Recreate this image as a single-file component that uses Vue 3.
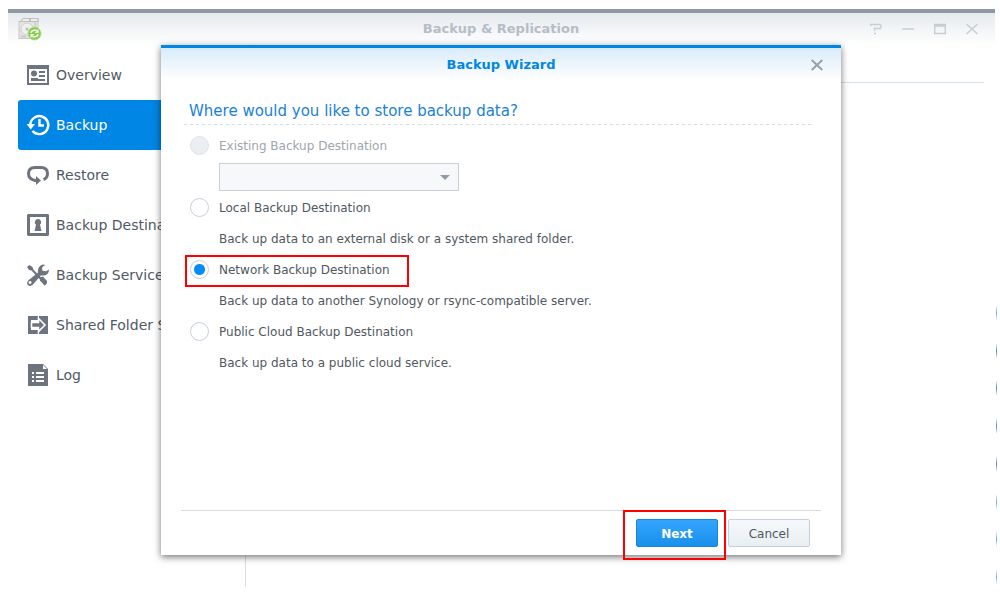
<script setup>
import { ref } from 'vue'

const menu = [
  { id: 'overview', label: 'Overview' },
  { id: 'backup', label: 'Backup' },
  { id: 'restore', label: 'Restore' },
  { id: 'destination', label: 'Backup Destination' },
  { id: 'services', label: 'Backup Services' },
  { id: 'sync', label: 'Shared Folder Sync' },
  { id: 'log', label: 'Log' }
]
const active = ref('backup')

const options = [
  { id: 'existing', label: 'Existing Backup Destination', disabled: true },
  { id: 'local', label: 'Local Backup Destination', note: 'Back up data to an external disk or a system shared folder.' },
  { id: 'network', label: 'Network Backup Destination', note: 'Back up data to another Synology or rsync-compatible server.' },
  { id: 'cloud', label: 'Public Cloud Backup Destination', note: 'Back up data to a public cloud service.' }
]
const choice = ref('network')
const marks = ['teal', 'blue', 'blue', 'blue', 'blue', 'teal', 'teal', 'teal']
</script>

<template>
  <div class="desktop">
    <main class="window">
      <header class="titlebar">
        <svg class="app-icon" viewBox="0 0 24 24" aria-hidden="true">
          <path d="M1 5L5 1H21V20H3z" fill="#d2d2d2" />
          <path d="M5 1.500h6.500v3H3zM12.500 1.500H20v3h-7.500z" fill="#eee" stroke="#aaa" stroke-width=".6" />
          <path d="M17 5h4v15h-4z" fill="#dedede" />
          <rect x="1" y="4.500" width="16" height="17" fill="#e4e4e4" stroke="#bdbdbd" stroke-width=".8" />
          <circle cx="9" cy="12" r="6" fill="#efefef" stroke="#c6c6c6" stroke-width=".7" />
          <circle cx="9" cy="12" r="1.500" fill="#bbb" />
          <path d="M3 18.500h5v2H3z" fill="#cacaca" />
          <circle cx="16.500" cy="16.500" r="6.500" fill="#84cf48" stroke="#aade83" stroke-width=".8" />
          <path d="M12.800 15.800q.7-2.500 3.700-2.500h2M20.200 17.200q-.7 2.500-3.700 2.500h-2" fill="none" stroke="#fff" stroke-width="1.500" />
          <path d="M20.500 12v4h-4zM12.500 21v-4h4z" fill="#fff" />
        </svg>
        <h1>Backup &amp; Replication</h1>
        <div class="controls">
          <button type="button" aria-label="Help">
            <svg viewBox="0 0 12 12"><path d="M.5 3V1.500h9.500l1 1v2L10 5.500H4.500V8M4 10.500h2" /></svg>
          </button>
          <button type="button" aria-label="Minimize">
            <svg viewBox="0 0 12 12"><path d="M0 6h12" /></svg>
          </button>
          <button type="button" aria-label="Maximize">
            <svg viewBox="0 0 12 12"><path d="M.7 1.500h10.600v9H.7zM1 3h10" /></svg>
          </button>
          <button type="button" aria-label="Close">
            <svg viewBox="0 0 12 12"><path d="M.5 1l11 10M11.500 1L.5 11" /></svg>
          </button>
        </div>
      </header>

      <div class="body">
        <nav class="sidebar">
          <button
            v-for="item in menu"
            :key="item.id"
            type="button"
            class="item"
            :class="{ active: active === item.id }"
            @click="active = item.id"
          >
            <svg v-if="item.id === 'overview'" viewBox="0 0 22 22">
              <path fill-rule="evenodd" d="M0 1h22v20H0zM2 5v14h18V5z" />
              <circle cx="7" cy="9.500" r="3" />
              <path d="M4 14h7v2H4zM12 7h6v2h-6zM12 11h6v2h-6zM4 15h14v2H4z" />
            </svg>
            <svg v-else-if="item.id === 'backup'" viewBox="0 0 22 22">
              <path d="M3.300 11A9 9 0 1 1 5.500 17M12.500 5v6.500h4.500" fill="none" stroke="currentColor" stroke-width="2.400" />
              <path d="M-.5 10h8.500l-4.200 5.500z" />
            </svg>
            <svg v-else-if="item.id === 'restore'" viewBox="0 0 22 22">
              <path d="M10 16.500H8Q1.500 15 1.500 9.500 1.500 3.500 8 3.500h6q6.500 0 6.500 6 0 4.500-4 6" fill="none" stroke="currentColor" stroke-width="3" />
              <path d="M9 12l5 4.500-5 4.500z" />
            </svg>
            <svg v-else-if="item.id === 'destination'" viewBox="0 0 22 22">
              <path fill-rule="evenodd" d="M1 0h20l1 1v20l-1 1H1l-1-1V1zM3 3v16h16V3z" />
              <path d="M11 5a3.200 3.200 0 0 1 2 5.700L14.500 17h-7L9 10.700A3.200 3.200 0 0 1 11 5z" />
            </svg>
            <svg v-else-if="item.id === 'services'" viewBox="0 0 22 22">
              <path d="M0 3l2.500-2 3 2 .8 2.500L17 16.500l-1.500 1.700L4.500 6.500 2 6z" />
              <path d="M13 13.500l3-1 4 4.500q.5 3-2.500 4.500l-4.500-5z" />
              <path fill-rule="evenodd" d="M22 5.500q0 5.500-5.500 6-1.500.2-2.500-.3L6 20.500q-2.500 2.500-5 .7-2-2.500.5-5L11 8.500q-.7-6.500 5-8l2 .2-3 3 .5 3 3.500.5zM3 17a1.500 1.500 0 1 0 .1 0z" />
            </svg>
            <svg v-else-if="item.id === 'sync'" viewBox="0 0 22 22">
              <path d="M1 2h10v4H4v10h7v4H1zM12 2h9v18h-9z" />
              <path d="M4.500 8.500h7V4.500l6.500 6.500-6.500 6.500v-4h-7z" fill="#6c757f" stroke="#fff" stroke-width="1.600" />
            </svg>
            <svg v-else viewBox="0 0 22 22">
              <path d="M1 0h15l5 5v17H1z" />
              <path d="M16 1v4h4zM5 8h2v2H5zM9 8h8v2H9zM5 12h2v2H5zM9 12h8v2H9zM5 16h2v2H5zM9 16h8v2H9z" fill="#fff" />
            </svg>
            <span>{{ item.label }}</span>
          </button>
        </nav>
        <section class="content"><hr /></section>
      </div>
    </main>

    <div class="edge" aria-hidden="true">
      <i v-for="(m, i) in marks" :key="i" :class="m"></i>
    </div>

    <div class="overlay">
      <form class="dialog" role="dialog" aria-labelledby="wizard-title" @submit.prevent>
        <header class="dialog-head">
          <h2 id="wizard-title">Backup Wizard</h2>
          <button type="button" class="close" aria-label="Close">
            <svg viewBox="0 0 12 12"><path d="M.7 1l10.600 10M11.300 1L.7 11" /></svg>
          </button>
        </header>
        <div class="dialog-body">
          <h3>Where would you like to store backup data?</h3>
          <div v-for="o in options" :key="o.id" class="option">
            <label class="row" :class="{ off: o.disabled, marked: o.id === 'network' }">
              <input v-model="choice" type="radio" name="destination" :value="o.id" :disabled="o.disabled" />
              <span>{{ o.label }}</span>
            </label>
            <p v-if="o.note" class="row note">{{ o.note }}</p>
            <div v-else class="row note">
              <span class="picker">
                <select disabled aria-label="Existing Backup Destination"><option></option></select>
                <svg viewBox="0 0 10 5" aria-hidden="true"><path d="M0 0h10L5 5z" /></svg>
              </span>
            </div>
          </div>
        </div>
        <footer class="dialog-foot">
          <span class="next-wrap"><button type="submit" class="btn primary">Next</button></span>
          <button type="button" class="btn">Cancel</button>
        </footer>
      </form>
    </div>
  </div>
</template>

<style>
body {
  margin: 0;
  background: #fff;
}
</style>

<style scoped>
* {
  box-sizing: border-box;
}
.desktop {
  position: relative;
  display: flex;
  min-height: 100vh;
  padding: 9px 5px 13px 8px;
  overflow: hidden;
  font-family: "DejaVu Sans", Verdana, sans-serif;
  font-size: 12px;
  color: #50585f;
}
h1, h2, h3, p {
  margin: 0;
}
button {
  font-family: inherit;
  cursor: pointer;
}
.window {
  flex: 1;
  display: flex;
  flex-direction: column;
  border-top: 4px solid #8e98a4;
}
.titlebar {
  display: flex;
  align-items: center;
  justify-content: space-between;
  height: 32px;
  padding: 0 17px 0 10px;
  background: linear-gradient(#e6eaee, #fff);
}
.app-icon {
  width: 24px;
  height: 24px;
  margin-right: 90px;
}
h1 {
  font-size: 13px;
  line-height: 34px;
  color: #b6bdc5;
}
.controls {
  display: flex;
  gap: 20px;
}
.controls button,
.close {
  display: flex;
  padding: 0;
  border: 0;
  background: none;
}
.controls svg,
.close svg {
  width: 12px;
  height: 12px;
  fill: none;
  stroke: #c9cdd0;
  stroke-width: 1.4;
}
.body {
  flex: 1;
  display: flex;
}
.sidebar {
  width: 238px;
  padding: 5px 0 0 10px;
  border-right: 1px solid #dcdcdc;
}
.item {
  display: flex;
  align-items: center;
  gap: 7px;
  width: 100%;
  height: 50px;
  padding: 0 9px;
  border: 0;
  border-radius: 3px;
  background: none;
  color: #505a64;
  font-size: 14px;
  white-space: nowrap;
}
.item svg {
  width: 22px;
  height: 22px;
  overflow: visible;
  fill: currentColor;
  color: #6c757f;
}
.item.active {
  background: #0086e5;
  color: #fff;
}
.item.active svg {
  color: #fff;
}
.content {
  flex: 1;
  padding: 37px 11px 0;
}
hr {
  height: 1px;
  margin: 0;
  border: 0;
  background: #d3dfef;
}
.edge {
  position: absolute;
  top: 305px;
  right: 3px;
  bottom: 15px;
  display: flex;
  flex-direction: column;
  justify-content: space-between;
}
.edge i {
  width: 1px;
  height: 16px;
}
.teal {
  background: linear-gradient(#fff, #65b1c8, #fff);
}
.blue {
  background: linear-gradient(#fff, #4c86b8, #fff);
}
.overlay {
  position: absolute;
  inset: 0;
  display: flex;
  padding: 45px 159px 45px 161px;
}
.dialog {
  flex: 1;
  display: flex;
  flex-direction: column;
  border-top: 3px solid #0086e5;
  background: #fff;
  box-shadow: 0 2px 7px rgba(0, 0, 0, 0.55);
}
.dialog-head {
  display: grid;
  grid-template-columns: 1fr auto 1fr;
  align-items: center;
  height: 32px;
  padding: 0 18px;
  background: linear-gradient(#d8ebfa, #fff);
}
h2 {
  grid-column: 2;
  font-size: 13px;
  line-height: 34px;
  color: #0086e5;
}
.close {
  justify-self: end;
}
.close svg {
  stroke: #97a1ab;
  stroke-width: 2;
}
.dialog-body {
  flex: 1;
  padding: 17px 30px 0 20px;
}
h3 {
  height: 28px;
  padding-left: 8px;
  margin-bottom: 5px;
  font-size: 15px;
  font-weight: normal;
  line-height: 29px;
  color: #1a80dc;
  background: repeating-linear-gradient(90deg, #fff 0 3px, #d3dfec 3px 6px) bottom / 100% 1px no-repeat;
}
.row {
  position: relative;
  display: flex;
  align-items: center;
  height: 31px;
  padding-left: 9px;
}
.row.off {
  color: #9ea5ad;
}
.row.note {
  padding-left: 38px;
}
label.row {
  gap: 10px;
  width: 228px;
  white-space: nowrap;
}
.marked::after {
  content: "";
  position: absolute;
  inset: 1px 0 -2px 4px;
  border: 2px solid #f00;
}
input {
  appearance: none;
  flex: none;
  width: 19px;
  height: 19px;
  margin: 0;
  border: 1px solid #c6d0dc;
  border-radius: 50%;
  background: #fff;
}
input:checked {
  background: radial-gradient(circle, #058df5 5px, #fff 6px);
}
input:disabled {
  border-color: #dbe3ec;
  background: #ebeff3;
}
.picker {
  position: relative;
  display: flex;
  width: 240px;
}
select {
  appearance: none;
  width: 100%;
  height: 28px;
  border: 1px solid #c6d0dc;
  border-radius: 0;
  background: #f6f8fa;
  opacity: 1;
}
.picker svg {
  position: absolute;
  top: 12px;
  right: 9px;
  width: 10px;
  height: 5px;
  fill: #929ba5;
}
.dialog-foot {
  display: flex;
  justify-content: flex-end;
  gap: 10px;
  height: 45px;
  margin: 0 20px;
  padding: 8px 11px 0 0;
  border-top: 1px solid #d9dadb;
}
.next-wrap {
  position: relative;
  height: 28px;
}
.next-wrap::after {
  content: "";
  position: absolute;
  inset: -9px -8px -13px -13px;
  border: 2px solid #f00;
  pointer-events: none;
}
.btn {
  width: 82px;
  height: 28px;
  padding: 2px 0 0;
  border: 1px solid #c6d0dc;
  border-radius: 2px;
  background: linear-gradient(#f5f9fc, #e9eef3);
  color: #50585f;
  font-size: 12px;
}
.btn.primary {
  border-color: #1a84d8;
  background: linear-gradient(#32a5ff, #1a90ea);
  color: #fff;
  font-weight: bold;
}
</style>
